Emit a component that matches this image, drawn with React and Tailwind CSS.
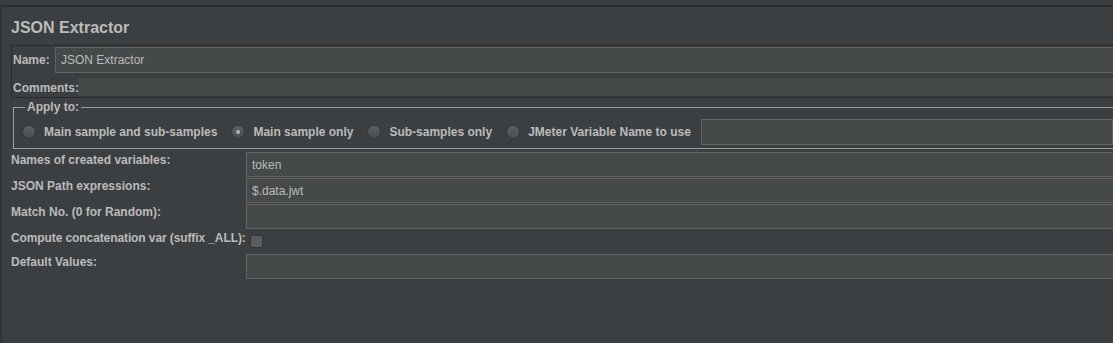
import React from 'react';

const font = "font-['Liberation_Sans',Arial,sans-serif]";

const Radio = ({ checked, label }) => (
  <label className="flex items-center gap-[8px]">
    <span className="w-[14px] h-[14px] rounded-full border border-[#333537] bg-gradient-to-b from-[#5c5f61] to-[#4b4e50] flex items-center justify-center shadow-[inset_0_1px_0_rgba(255,255,255,0.06)]">
      {checked && <span className="w-[4px] h-[4px] rounded-full bg-[#b5b5b5]" />}
    </span>
    <span className="font-bold">{label}</span>
  </label>
);

const Field = ({ value }) => (
  <div className="flex-1 h-[25px] border border-[#646464] bg-[#45494a] pl-[5px] flex items-center font-normal">
    {value}
  </div>
);

const rows = [
  { label: 'Names of created variables:', value: 'token' },
  { label: 'JSON Path expressions:', value: '$.data.jwt' },
  { label: 'Match No. (0 for Random):', value: '' },
];

export default function App() {
  return (
    <div className={`w-[1113px] h-[343px] overflow-hidden bg-[#3c3f41] text-[12px] text-[#bbbbbb] ${font}`}>
      <div className="h-[5px]" />
      <div className="w-[1140px] h-[338px] border-t-2 border-l-2 border-t-[#2b2d2f] border-l-[#313335] pl-[9px]">
        <h1 className="mt-[11px] text-[16px] leading-[20px] font-bold">JSON Extractor</h1>

        <div className="mt-[7px] border border-[#2b2b2b] pt-[1px] pl-[1px]">
          <div className="flex items-center">
            <span className="w-[42px] font-bold">Name:</span>
            <div className="flex-1 h-[26px] border border-[#646464] bg-[#45494a] pl-[5px] flex items-center">
              JSON Extractor
            </div>
          </div>
          <div className="mt-[5px] flex items-center h-[19px]">
            <span className="w-[65px] font-bold">Comments:</span>
            <div className="flex-1 h-full bg-[#45494a] border-b border-[#353739]" />
          </div>
        </div>

        <fieldset className="mt-[2px] ml-[2px] border border-[#9a9c9e] pl-[8px] pt-[5px] pb-[3px]">
          <legend className="ml-[3px] px-[2px] font-bold leading-[14px]">Apply to:</legend>
          <div className="flex items-center h-[26px]">
            <div className="flex items-center gap-[14px]">
              <Radio label="Main sample and sub-samples" />
              <Radio checked label="Main sample only" />
              <Radio label="Sub-samples only" />
              <Radio label="JMeter Variable Name to use" />
            </div>
            <div className="ml-[10px] w-[412px] h-[26px] border border-[#646464] bg-[#45494a]" />
          </div>
        </fieldset>

        <div className="mt-[3px] flex flex-col gap-[1px]">
          {rows.map((r) => (
            <div key={r.label} className="flex">
              <span className="w-[235px] font-bold leading-[16px]">{r.label}</span>
              <Field value={r.value} />
            </div>
          ))}
          <div className="flex h-[23px]">
            <span className="w-[235px] font-bold leading-[16px] whitespace-nowrap tracking-[-0.1px]">Compute concatenation var (suffix _ALL):</span>
            <span className="mt-[5px] ml-[4px] w-[13px] h-[13px] rounded-[2px] border border-[#333537] bg-[#5a5d5f]" />
          </div>
          <div className="flex">
            <span className="w-[235px] font-bold leading-[16px]">Default Values:</span>
            <Field value="" />
          </div>
        </div>
      </div>
    </div>
  );
}
